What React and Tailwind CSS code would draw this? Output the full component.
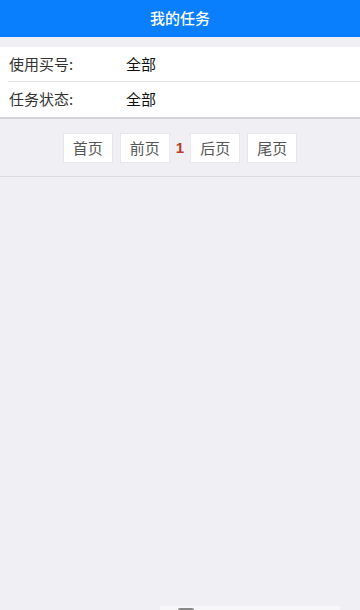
export default function App() {
  const rows = [
    { label: '使用买号:', value: '全部' },
    { label: '任务状态:', value: '全部' },
  ];

  return (
    <div
      className="flex h-[610px] w-[360px] flex-col overflow-hidden bg-[#efeff4] text-[#333]"
      style={{ fontFamily: '"Noto Sans CJK SC", "Liberation Sans", sans-serif' }}
    >
      <div className="flex h-[37px] items-center justify-center bg-[#0a7ffd] text-[15px] font-medium text-white">
        我的任务
      </div>

      <div className="mt-[10px] border-b-2 border-[#d4d4d8] bg-white">
        {rows.map((r, i) => (
          <div
            key={r.label}
            className={
              'ml-2 flex h-[35px] items-center text-[15px] ' +
              (i === 0 ? 'border-b border-[#e2e2e6]' : '')
            }
          >
            <span className="w-[118px] pl-px text-[#333]">{r.label}</span>
            <span className="text-[#111]">{r.value}</span>
          </div>
        ))}
      </div>

      <div className="flex items-center justify-center gap-[7px] border-b border-[#dcdce0] pb-[13px] pt-[14px]">
        <button className="h-[30px] w-[50px] border border-[#e8e8ec] bg-white text-[15px] text-[#555]">首页</button>
        <button className="h-[30px] w-[50px] border border-[#e8e8ec] bg-white text-[15px] text-[#555]">前页</button>
        <span className="-mx-px text-[15px] font-bold text-[#c0392b]" style={{ fontFamily: '"Liberation Sans", sans-serif' }}>1</span>
        <button className="h-[30px] w-[50px] border border-[#e8e8ec] bg-white text-[15px] text-[#555]">后页</button>
        <button className="h-[30px] w-[50px] border border-[#e8e8ec] bg-white text-[15px] text-[#555]">尾页</button>
      </div>

      <div className="mt-auto ml-[160px] flex h-[4px] w-[180px] items-end bg-[#f7f7f9]">
        <span className="ml-[18px] h-[2px] w-[16px] rounded-t bg-[#888]" />
      </div>
    </div>
  );
}
